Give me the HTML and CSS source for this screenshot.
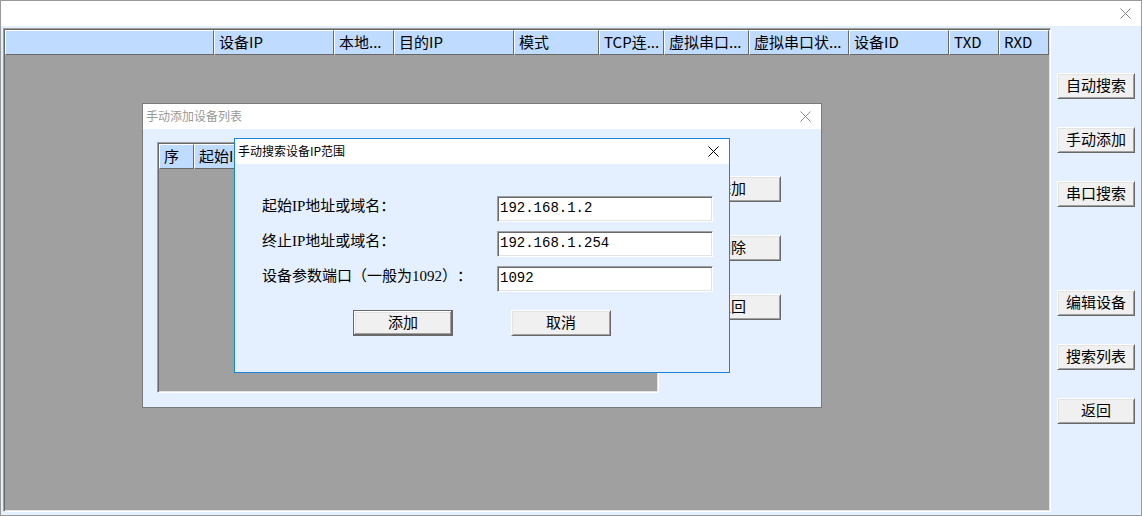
FILE: index.html
```html
<!DOCTYPE html>
<html lang="zh-CN">
<head>
<meta charset="utf-8">
<meta name="viewport" content="width=device-width, initial-scale=1">
<title>设备管理</title>
<link rel="stylesheet" href="styles.css">
</head>
<body>
<main class="window window-main">
  <header class="titlebar">
    <button class="close" type="button" aria-label="关闭"><svg viewBox="0 0 11 11" width="11" height="11"><path d="M.5.5l10 10M10.5.5l-10 10"/></svg></button>
  </header>
  <div class="main-body">
    <div class="list">
      <table class="devices">
        <colgroup><col><col class="w120"><col class="w60"><col class="w120"><col class="w85"><col class="w65"><col class="w85"><col class="w100"><col class="w100"><col class="w50"><col class="w50"></colgroup>
        <thead>
          <tr><th></th><th>设备IP</th><th>本地...</th><th>目的IP</th><th>模式</th><th>TCP连...</th><th>虚拟串口...</th><th>虚拟串口状...</th><th>设备ID</th><th>TXD</th><th>RXD</th></tr>
        </thead>
      </table>
    </div>
    <nav class="side">
      <div class="side-group">
        <button class="btn" type="button">自动搜索</button>
        <button class="btn" type="button">手动添加</button>
        <button class="btn" type="button">串口搜索</button>
      </div>
      <div class="side-group">
        <button class="btn" type="button">编辑设备</button>
        <button class="btn" type="button">搜索列表</button>
        <button class="btn" type="button">返回</button>
      </div>
    </nav>
  </div>

  <section class="window dialog dialog-list" role="dialog" aria-labelledby="list-title">
    <header class="titlebar">
      <h2 class="title" id="list-title">手动添加设备列表</h2>
      <button class="close" type="button" aria-label="关闭"><svg viewBox="0 0 11 11" width="11" height="11"><path d="M.5.5l10 10M10.5.5l-10 10"/></svg></button>
    </header>
    <div class="list-body">
      <div class="list">
        <table class="ranges">
          <colgroup><col class="w35"><col class="w120"></colgroup>
          <thead><tr><th>序</th><th>起始IP</th></tr></thead>
        </table>
      </div>
      <div class="list-actions">
        <button class="btn" type="button">添加</button>
        <button class="btn" type="button">删除</button>
        <button class="btn" type="button">返回</button>
      </div>
    </div>
  </section>

  <section class="window dialog dialog-range" role="dialog" aria-labelledby="range-title">
    <header class="titlebar">
      <h2 class="title" id="range-title">手动搜索设备IP范围</h2>
      <button class="close" type="button" aria-label="关闭"><svg viewBox="0 0 11 11" width="11" height="11"><path d="M.5.5l10 10M10.5.5l-10 10"/></svg></button>
    </header>
    <form class="range-form">
      <div class="fields">
        <div class="field"><label for="start">起始IP地址或域名：</label><input id="start" type="text" value="192.168.1.2"></div>
        <div class="field"><label for="end">终止IP地址或域名：</label><input id="end" type="text" value="192.168.1.254"></div>
        <div class="field"><label for="port">设备参数端口（一般为1092）：</label><input id="port" type="text" value="1092"></div>
      </div>
      <div class="form-actions">
        <button class="btn btn-default" type="button">添加</button>
        <button class="btn" type="button">取消</button>
      </div>
    </form>
  </section>
</main>
</body>
</html>
```
FILE: styles.css
```css
* { box-sizing: border-box; }

body {
  margin: 0;
  color: #000;
  font-family: "Liberation Serif", "Noto Sans CJK SC", serif;
  font-size: 15px;
  line-height: 20px;
  text-spacing-trim: space-all;
}

.window {
  display: flex;
  flex-direction: column;
  background: #e4f0ff;
  border: 1px solid #999;
}

.window-main {
  position: relative;
  min-height: 100vh;
}

.titlebar {
  display: flex;
  flex: none;
  align-items: center;
  height: 25px;
  padding: 0 10px 0 3px;
  background: #fff;
}

.title {
  margin: 0;
  padding-bottom: 2px;
  font: 12px/20px "Noto Sans CJK SC", sans-serif;
}

.close {
  display: flex;
  margin-left: auto;
  padding: 0;
  background: none;
  border: 0;
}

.close svg {
  fill: none;
  stroke: #888;
  stroke-width: 1;
}

.main-body {
  display: flex;
  flex: 1;
  gap: 6px;
  padding: 2px 6px 3px 2px;
}

/* Sunken two-step bevel shared by lists and text boxes */
.list,
.field input {
  border: 1px solid;
  border-color: #a0a0a0 #fff #fff #a0a0a0;
  box-shadow: inset 1px 1px #696969, inset -1px -1px #e3e3e3;
}

.list {
  flex: 1;
  min-width: 0;
  padding: 1px;
  background: #a0a0a0;
  overflow: hidden;
}

table {
  table-layout: fixed;
  border-spacing: 0;
  font-family: "Noto Sans CJK SC", sans-serif;
}

.devices { width: 100%; }
.ranges { width: 155px; }

th {
  height: 25px;
  padding: 0 0 2px 4px;
  background: #bfdbff;
  border: 1px solid;
  border-color: #fff #696969 #696969 #fff;
  font-weight: 400;
  text-align: left;
  white-space: nowrap;
  overflow: hidden;
}

.w35 { width: 35px; }
.w50 { width: 50px; }
.w60 { width: 60px; }
.w65 { width: 65px; }
.w85 { width: 85px; }
.w100 { width: 100px; }
.w120 { width: 120px; }

.side {
  display: flex;
  flex: none;
  flex-direction: column;
  gap: 83px;
  width: 78px;
  padding-top: 45px;
}

.side-group {
  display: flex;
  flex-direction: column;
  gap: 28px;
}

/* Raised two-step bevel */
.btn {
  height: 26px;
  padding: 0;
  color: #000;
  background: #f0f0f0;
  border: 1px solid;
  border-color: #fff #696969 #696969 #fff;
  border-radius: 0;
  box-shadow: inset 1px 1px #e3e3e3, inset -1px -1px #a0a0a0;
  font: inherit;
}

.btn-default {
  border-color: #696969;
  box-shadow: inset -1px -1px #696969, inset 1px 1px #fff, inset -2px -2px #a0a0a0, inset 2px 2px #e3e3e3;
}

.dialog { position: absolute; }

.dialog-list {
  top: 102px;
  left: 141px;
  width: 680px;
  border-color: #7a7a7a;
}

.dialog-list .title { color: #999; }

.list-body {
  display: flex;
  gap: 22px;
  padding: 13px 40px 14px 14px;
}

.list-body .list { height: 251px; }

.list-actions {
  display: flex;
  flex-direction: column;
  gap: 33px;
  width: 100px;
  padding-top: 34px;
}

.dialog-range {
  top: 137px;
  left: 233px;
  width: 496px;
  border-color: #1883d7;
}

.dialog-range .close svg { stroke: #000; }

.range-form { padding: 32px 0 36px; }

.fields {
  display: flex;
  flex-direction: column;
  gap: 9px;
  padding: 0 16px 0 27px;
}

.field {
  display: flex;
  justify-content: space-between;
}

.field input {
  width: 216px;
  height: 26px;
  padding: 0 2px 2px;
  color: #000;
  background: #fff;
  border-radius: 0;
  font: 14px "Liberation Mono", monospace;
}

.form-actions {
  display: flex;
  justify-content: center;
  gap: 58px;
  margin-top: 18px;
}

.form-actions .btn { width: 100px; }
```
